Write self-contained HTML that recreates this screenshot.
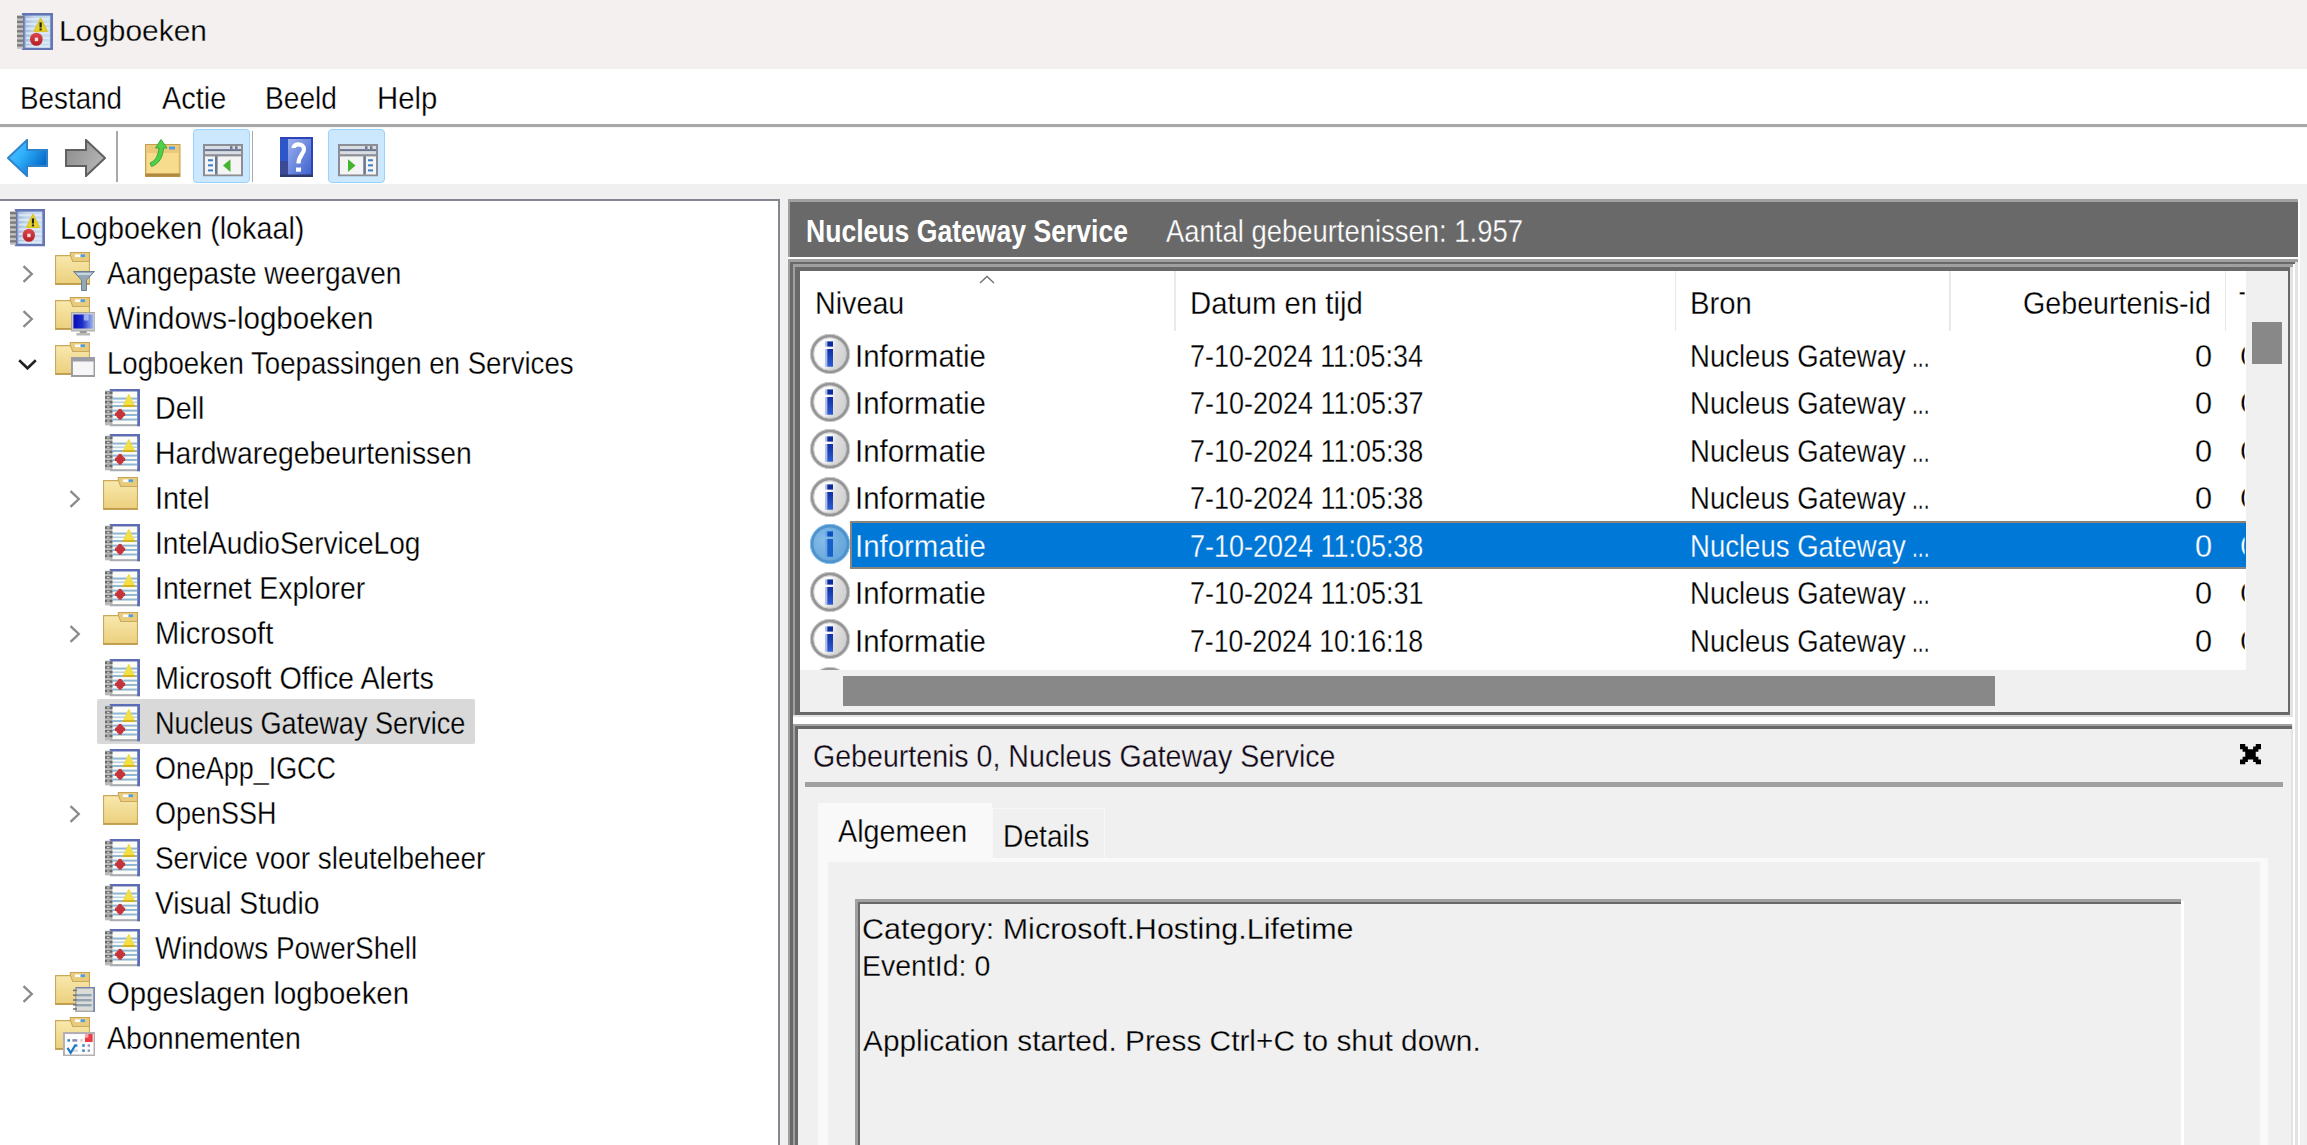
<!DOCTYPE html>
<html><head><meta charset="utf-8"><title>Logboeken</title>
<style>
html,body{margin:0;padding:0}
body{width:2307px;height:1145px;overflow:hidden;background:#fff;position:relative;font-family:"Liberation Sans", sans-serif;font-size:30px;color:#000}
body>div,body>svg,body>span{position:absolute;display:block}
.t{white-space:pre;transform-origin:0 50%;line-height:1;}
</style></head><body>
<svg width="0" height="0" style="position:absolute;left:0;top:0">
<defs>
<linearGradient id="gFold" x1="0" y1="0" x2="0" y2="1"><stop offset="0" stop-color="#f9e9ae"/><stop offset="1" stop-color="#ebcf7c"/></linearGradient>
<linearGradient id="gBack" x1="0" y1="0" x2="1" y2="0.6"><stop offset="0" stop-color="#58c6ff"/><stop offset="0.45" stop-color="#2fb0fb"/><stop offset="1" stop-color="#0468c8"/></linearGradient>
<linearGradient id="gFwd" x1="0" y1="0" x2="1" y2="0.5"><stop offset="0" stop-color="#8a8a8a"/><stop offset="0.6" stop-color="#a3a3a3"/><stop offset="1" stop-color="#b5b5b5"/></linearGradient>
<linearGradient id="gHelp" x1="0" y1="0" x2="1" y2="1"><stop offset="0" stop-color="#9cb0ee"/><stop offset="1" stop-color="#3f63cf"/></linearGradient>
<linearGradient id="gInfo" x1="0" y1="0.3" x2="1" y2="0.6"><stop offset="0" stop-color="#ffffff"/><stop offset="0.42" stop-color="#fafafa"/><stop offset="0.62" stop-color="#dedede"/><stop offset="1" stop-color="#cecece"/></linearGradient>
<linearGradient id="gInfoI" x1="0" y1="0" x2="0" y2="1"><stop offset="0" stop-color="#1030a6"/><stop offset="1" stop-color="#2c5cd4"/></linearGradient>
<radialGradient id="gInfoS" cx="0.35" cy="0.4" r="0.8"><stop offset="0" stop-color="#86bdea"/><stop offset="1" stop-color="#5c9fd6"/></radialGradient>
<linearGradient id="gMon" x1="0" y1="0" x2="1" y2="0"><stop offset="0" stop-color="#0a0ab8"/><stop offset="0.45" stop-color="#1c2cc8"/><stop offset="1" stop-color="#9ab4f0"/></linearGradient>
<linearGradient id="gEvt" x1="0" y1="0" x2="1" y2="0"><stop offset="0" stop-color="#9fb6dc"/><stop offset="0.35" stop-color="#c2d6ec"/><stop offset="1" stop-color="#c8dcf0"/></linearGradient>
<linearGradient id="gErr" x1="0" y1="0" x2="0" y2="1"><stop offset="0" stop-color="#dc4a50"/><stop offset="1" stop-color="#b41c22"/></linearGradient>
</defs>

<symbol id="log" viewBox="0 0 16 16" preserveAspectRatio="none">
 <rect x="2.2" y="0" width="13.8" height="16" fill="#a9acb2"/>
 <rect x="2.2" y="0" width="13.8" height="1.1" fill="#5d6cb6"/>
 <rect x="14.7" y="0" width="1.3" height="16" fill="#5d6cb6"/>
 <rect x="3.4" y="1.1" width="11.3" height="13.9" fill="#fbfbf7"/>
 <g fill="#8fb7d4">
  <rect x="3.4" y="3.65" width="11.3" height="0.85"/>
  <rect x="3.4" y="5.3" width="11.3" height="0.7" opacity="0.6"/>
  <rect x="3.4" y="6.85" width="11.3" height="0.85"/>
  <rect x="3.4" y="8.8" width="11.3" height="0.85"/>
  <rect x="3.4" y="10.65" width="11.3" height="0.85"/>
  <rect x="3.4" y="12.6" width="11.3" height="0.85"/>
 </g>
 <rect x="0" y="0.7" width="2.6" height="14.8" fill="#b9b9b9"/>
 <g fill="#666">
  <rect x="0" y="1.1" width="3.4" height="1"/><rect x="0" y="3.1" width="3.4" height="1"/><rect x="0" y="5.1" width="3.4" height="1"/>
  <rect x="0" y="7.1" width="3.4" height="1"/><rect x="0" y="9.1" width="3.4" height="1"/><rect x="0" y="11.1" width="3.4" height="1"/><rect x="0" y="13.1" width="3.4" height="1"/>
 </g>
 <g fill="#cfcfcf"><rect x="0.9" y="1.4" width="1.2" height="0.5"/><rect x="0.9" y="3.4" width="1.2" height="0.5"/><rect x="0.9" y="5.4" width="1.2" height="0.5"/><rect x="0.9" y="7.4" width="1.2" height="0.5"/><rect x="0.9" y="9.4" width="1.2" height="0.5"/><rect x="0.9" y="11.4" width="1.2" height="0.5"/><rect x="0.9" y="13.4" width="1.2" height="0.5"/></g>
 <path d="M10.9 2.5 L13.4 7.3 L8.4 7.3 Z" fill="#f3e044" stroke="#f0dc48" stroke-width="0.6" stroke-linejoin="round"/>
 <rect x="8.1" y="6.9" width="5.6" height="0.7" fill="#d0ac14"/>
 <circle cx="6.9" cy="10.8" r="1.9" fill="#c8363b"/>
 <rect x="6.2" y="8.5" width="1.4" height="4.6" fill="#c4343a"/><rect x="4.6" y="10.1" width="4.6" height="1.4" fill="#c4343a"/>
</symbol>

<symbol id="evt" viewBox="0 0 16 16" preserveAspectRatio="none">
 <rect x="2.2" y="0" width="13.8" height="16" fill="#6475b6"/>
 <rect x="3.4" y="1.1" width="11.4" height="13.8" fill="url(#gEvt)"/>
 <g fill="#e2ecf7" opacity="0.85">
  <rect x="4" y="2.2" width="10.4" height="0.9"/><rect x="4" y="4.2" width="10.4" height="0.9"/><rect x="4" y="6.2" width="10.4" height="0.9"/>
  <rect x="4" y="8.2" width="10.4" height="0.9"/><rect x="4" y="10.2" width="10.4" height="0.9"/><rect x="4" y="12.2" width="10.4" height="0.9"/><rect x="4" y="13.8" width="10.4" height="0.8"/>
 </g>
 <rect x="0" y="0.9" width="2.7" height="14.4" fill="#c2c2c2"/>
 <g fill="#7a7a7a">
  <rect x="0" y="1.3" width="3" height="1"/><rect x="0" y="3.3" width="3" height="1"/><rect x="0" y="5.3" width="3" height="1"/>
  <rect x="0" y="7.3" width="3" height="1"/><rect x="0" y="9.3" width="3" height="1"/><rect x="0" y="11.3" width="3" height="1"/><rect x="0" y="13.3" width="3" height="1"/>
 </g>
 <path d="M10.5 2.3 L13.4 7.8 L7.6 7.8 Z" fill="#ead42c" stroke="#dcc528" stroke-width="0.6" stroke-linejoin="round"/>
 <rect x="10" y="4" width="1" height="2.2" fill="#222"/><rect x="10" y="6.6" width="1" height="0.8" fill="#222"/>
 <circle cx="8.6" cy="11.2" r="2.8" fill="url(#gErr)"/>
 <rect x="7.9" y="10.5" width="1.5" height="1.5" fill="#f8dede"/>
</symbol>

<symbol id="folder" viewBox="0 0 16 15" preserveAspectRatio="none">
 <path d="M7 0.25 H15.75 V5 H7 Z" fill="#e9cb7d" stroke="#c7a457" stroke-width="0.5"/>
 <rect x="9.1" y="1.1" width="2.6" height="1.2" fill="#fdfdfd"/>
 <rect x="11.7" y="1.1" width="2" height="1.2" fill="#4a9cec"/>
 <path d="M0.25 1.65 H7.1 L8.1 4.3 H15.75 V14.75 H0.25 Z" fill="url(#gFold)" stroke="#caa95d" stroke-width="0.5"/>
 <rect x="0.25" y="14.1" width="15.5" height="0.65" fill="#bf9b4e"/>
</symbol>

<symbol id="ovFilter" viewBox="0 0 22 20" preserveAspectRatio="none">
 <path d="M0.5 0.5 H21.5 L13.5 9 V19.5 H8.5 V9 Z" fill="#93a7b7" stroke="#6c7f8e" stroke-width="1"/>
 <path d="M3 2 H19 L17 4 H5 Z" fill="#c8d5df"/>
</symbol>
<symbol id="ovMon" viewBox="0 0 25 24" preserveAspectRatio="none">
 <rect x="0.5" y="0.5" width="24" height="18.5" fill="#c9c9c9" stroke="#a8a8a8"/>
 <rect x="2.5" y="2.5" width="20" height="14" fill="url(#gMon)"/>
 <rect x="13" y="2.5" width="5" height="6" fill="#c6d6f8" opacity="0.7"/>
 <rect x="9" y="19" width="7" height="2" fill="#9a9a9a"/>
 <rect x="5.5" y="21" width="14" height="2.5" fill="#b8b8b8"/>
</symbol>
<symbol id="ovWin" viewBox="0 0 25 20" preserveAspectRatio="none">
 <rect x="1" y="1" width="23" height="18" fill="#f6f6f6" stroke="#9b9da3" stroke-width="2"/>
 <rect x="1" y="1" width="23" height="3.5" fill="#9b9da3"/>
</symbol>
<symbol id="ovBook" viewBox="0 0 22 25" preserveAspectRatio="none">
 <rect x="2.4" y="0" width="19.6" height="25" fill="#7785b3"/>
 <rect x="2.4" y="1.6" width="17.8" height="23.4" fill="#a9a9a9"/>
 <rect x="3.6" y="1.6" width="16.6" height="22" fill="#dcdcd6"/>
 <g fill="#8fa3b3"><rect x="3.6" y="7" width="15" height="2.4"/><rect x="3.6" y="12" width="15" height="2.4"/><rect x="3.6" y="17" width="15" height="2.4"/></g>
 <g fill="#777"><rect x="0" y="2.6" width="4" height="1.6"/><rect x="0" y="7.4" width="4" height="1.6"/><rect x="0" y="12.2" width="4" height="1.6"/><rect x="0" y="17" width="4" height="1.6"/><rect x="0" y="21.2" width="4" height="1.6"/></g>
</symbol>
<symbol id="ovCal" viewBox="0 0 33 24" preserveAspectRatio="none">
 <rect x="1" y="1" width="31" height="22" fill="#fdfdfd" stroke="#b3afb3" stroke-width="2"/>
 <rect x="22.3" y="2" width="7.8" height="7.8" fill="#ec3b44"/>
 <rect x="22.3" y="2" width="3.5" height="3.5" fill="#f7a6aa"/>
 <g fill="#2f86c8"><rect x="4.5" y="7" width="2.6" height="2.4"/><rect x="9.5" y="7" width="5" height="2.4" fill="#8d86ac"/><rect x="17.5" y="7" width="2.6" height="2.4" fill="#e6c9cf"/>
 <rect x="12" y="12" width="2.6" height="2.4"/><rect x="19.5" y="12" width="2.6" height="2.4"/><rect x="25" y="12" width="2.4" height="2.4" fill="#9a94b8"/>
 <rect x="10" y="17" width="5" height="2.4" fill="#d6d6de"/><rect x="19.5" y="17" width="2.6" height="2.4"/><rect x="25" y="17" width="2.4" height="2.4" fill="#9a94b8"/></g>
 <path d="M4.6 15.5 L7.8 20.3 L12.6 12.6" fill="none" stroke="#1f78c4" stroke-width="2.2"/>
</symbol>

<symbol id="back" viewBox="0 0 41 38" preserveAspectRatio="none">
 <path d="M1 19 L20 1 V11 H40 V27 H20 V37 Z" fill="url(#gBack)" stroke="#2f83cc" stroke-width="2" stroke-linejoin="miter"/>
</symbol>
<symbol id="fwd" viewBox="0 0 41 38" preserveAspectRatio="none">
 <path d="M40 19 L21 1 V11 H1 V27 H21 V37 Z" fill="url(#gFwd)" stroke="#606060" stroke-width="2" stroke-linejoin="miter"/>
</symbol>
<symbol id="up" viewBox="0 0 36 38" preserveAspectRatio="none">
 <rect x="0.5" y="5.5" width="34.5" height="32" fill="#ecc978" stroke="#c39f52"/>
 <rect x="2" y="14" width="31.5" height="20" fill="#f7dc8e"/>
 <rect x="0.5" y="34.5" width="34.5" height="3" fill="#b08a3e"/>
 <rect x="24" y="7.5" width="6" height="3" fill="#4a9cec"/>
 <path d="M5 24 C11 22 13 16 14 9 L10.5 9 L16 0.5 L22 9 L18.5 9 C18 18 14 25 6.5 27.5 Z" fill="#4fd04a" stroke="#3aa836" stroke-width="1"/>
</symbol>
<symbol id="pane1" viewBox="0 0 40 32" preserveAspectRatio="none">
 <rect x="1" y="1" width="38" height="30" fill="#f4f4f4" stroke="#8b8e95" stroke-width="2"/>
 <rect x="2" y="2" width="36" height="3" fill="#d9dce3"/>
 <rect x="27" y="2.2" width="2.5" height="2.6" fill="#69748c"/><rect x="32" y="2.2" width="2.5" height="2.6" fill="#69748c"/>
 <rect x="2" y="5" width="36" height="2.2" fill="#6b7690"/>
 <rect x="2" y="7.6" width="36" height="2.2" fill="#d9dce3"/>
 <rect x="2" y="10" width="36" height="2.2" fill="#8b8e95"/>
 <rect x="12" y="12" width="2.6" height="18" fill="#6b7690"/>
 <g fill="#3b7fc4"><rect x="5" y="15" width="5" height="2"/><rect x="5" y="20" width="5" height="2"/><rect x="5" y="25" width="5" height="2"/></g>
 <path d="M27.5 15 V27.5 L20 21.2 Z" fill="#42b52c"/>
</symbol>
<symbol id="pane2" viewBox="0 0 40 32" preserveAspectRatio="none">
 <rect x="1" y="1" width="38" height="30" fill="#f4f4f4" stroke="#8b8e95" stroke-width="2"/>
 <rect x="2" y="2" width="36" height="3" fill="#d9dce3"/>
 <rect x="27" y="2.2" width="2.5" height="2.6" fill="#69748c"/><rect x="32" y="2.2" width="2.5" height="2.6" fill="#69748c"/>
 <rect x="2" y="5" width="36" height="2.2" fill="#6b7690"/>
 <rect x="2" y="7.6" width="36" height="2.2" fill="#d9dce3"/>
 <rect x="2" y="10" width="36" height="2.2" fill="#8b8e95"/>
 <rect x="25.3" y="12" width="2.6" height="18" fill="#6b7690"/>
 <g fill="#3b7fc4"><rect x="30" y="15" width="5" height="2"/><rect x="30" y="20" width="5" height="2"/><rect x="30" y="25" width="5" height="2"/></g>
 <path d="M10 15 V27.5 L17.5 21.2 Z" fill="#42b52c"/>
</symbol>
<symbol id="help" viewBox="0 0 33 40" preserveAspectRatio="none">
 <rect x="0" y="0" width="33" height="40" fill="#2c44b8"/>
 <rect x="0" y="2" width="8" height="36" fill="#2f56c8"/>
 <rect x="0" y="24" width="8" height="14" fill="#3a4a94"/>
 <rect x="8" y="2" width="23" height="36" fill="url(#gHelp)"/>
 <rect x="0" y="37.5" width="33" height="2.5" fill="#2e3a6e"/>
 <path d="M13.5 11 C13.5 6.5 23.5 5.5 24 12 C24.3 16.5 18.5 18.5 18.5 26.5" fill="none" stroke="#fff" stroke-width="4.2"/>
 <rect x="16" y="30.5" width="5" height="4.2" fill="#fff"/>
</symbol>

<symbol id="info" viewBox="0 0 40 40">
 <circle cx="20" cy="20" r="18.2" fill="url(#gInfo)" stroke="#959595" stroke-width="3.4"/>
 <circle cx="20" cy="20" r="19.7" fill="none" stroke="#cfcfcf" stroke-width="0.9"/>
 <circle cx="20" cy="20" r="16.2" fill="none" stroke="#c9c9c9" stroke-width="0.8"/>
 <rect x="15.1" y="7.4" width="2.4" height="5.2" fill="#aebce6"/>
 <rect x="15.1" y="15" width="2.4" height="17.7" fill="#aebce6"/>
 <rect x="17.3" y="7.4" width="5.7" height="5.2" fill="#0c2c9c"/>
 <rect x="17.3" y="15" width="5.7" height="17.7" fill="url(#gInfoI)"/>
</symbol>
<symbol id="infoS" viewBox="0 0 40 40">
 <circle cx="20" cy="20" r="18.2" fill="url(#gInfoS)" stroke="#4f93cc" stroke-width="3.4"/>
 <circle cx="20" cy="20" r="19.7" fill="none" stroke="#8cc4f0" stroke-width="0.9"/>
 <rect x="15.1" y="7.4" width="2.4" height="5.2" fill="#6aa6e2"/>
 <rect x="15.1" y="15" width="2.4" height="17.7" fill="#6aa6e2"/>
 <rect x="17.3" y="7.4" width="5.7" height="5.2" fill="#0a50c0"/>
 <rect x="17.3" y="15" width="5.7" height="17.7" fill="#1660cc"/>
</symbol>

<symbol id="chevR" viewBox="0 0 12 18"><path d="M1.5 1.2 L9.8 9 L1.5 16.8" fill="none" stroke="#8a8a8a" stroke-width="2.3"/></symbol>
<symbol id="chevD" viewBox="0 0 19 11"><path d="M1.2 1.3 L9.5 9.3 L17.8 1.3" fill="none" stroke="#202020" stroke-width="2.6"/></symbol>
<symbol id="chevU" viewBox="0 0 16 9"><path d="M1 8 L8 1.5 L15 8" fill="none" stroke="#707070" stroke-width="1.4"/></symbol>
<symbol id="close" viewBox="0 0 8 8" preserveAspectRatio="none"><path fill="#000" d="M0 0H2V1H3V2H5V1H6V0H8V2H7V3H6V5H7V6H8V8H6V7H5V6H3V7H2V8H0V6H1V5H2V3H1V2H0Z"/></symbol>
</svg>
<div style="left:0px;top:0px;width:2307px;height:69px;background:#f3f0ef;"></div>
<svg style="left:17px;top:12.5px" width="36" height="37.5" ><use href="#evt"/></svg>
<span class="t" style="left:59.20px;top:16.30px;font-size:30.3px;color:#000;transform:scaleX(0.9864);-webkit-text-stroke:0.28px #f3f0ef;">Logboeken</span>
<div style="left:0px;top:69px;width:2307px;height:55px;background:#fff;"></div>
<span class="t" style="left:19.89px;top:83.00px;font-size:30.5px;color:#000;transform:scaleX(0.9115);-webkit-text-stroke:0.28px #fff;">Bestand</span>
<span class="t" style="left:162.30px;top:83.00px;font-size:30.5px;color:#000;transform:scaleX(0.9467);-webkit-text-stroke:0.28px #fff;">Actie</span>
<span class="t" style="left:265.07px;top:83.00px;font-size:30.5px;color:#000;transform:scaleX(0.9223);-webkit-text-stroke:0.28px #fff;">Beeld</span>
<span class="t" style="left:377.47px;top:83.00px;font-size:30.5px;color:#000;transform:scaleX(0.9598);-webkit-text-stroke:0.28px #fff;">Help</span>
<div style="left:0px;top:124px;width:2307px;height:2.5px;background:#a7a7a7;"></div>
<div style="left:0px;top:126.5px;width:2307px;height:1.5px;background:#f3f7fc;"></div>
<div style="left:0px;top:128px;width:2307px;height:55.5px;background:#fff;"></div>
<div style="left:0px;top:183.5px;width:2307px;height:16px;background:#f0f0f0;"></div>
<svg style="left:7px;top:139px" width="41" height="38" ><use href="#back"/></svg>
<svg style="left:64.5px;top:139px" width="41" height="38" ><use href="#fwd"/></svg>
<div style="left:116.2px;top:131px;width:1.6px;height:51px;background:#a9a9a9;"></div>
<svg style="left:145px;top:139px" width="36" height="38" ><use href="#up"/></svg>
<div style="left:192.5px;top:129px;width:57.5px;height:54px;background:#cce8ff;border:1.5px solid #99d1ff;border-radius:4px;box-sizing:border-box"></div>
<svg style="left:202.5px;top:144px" width="40" height="32.5" ><use href="#pane1"/></svg>
<div style="left:251.8px;top:131px;width:1.6px;height:51px;background:#a9a9a9;"></div>
<svg style="left:280px;top:136.5px" width="33" height="40" ><use href="#help"/></svg>
<div style="left:327.5px;top:129px;width:57.5px;height:54px;background:#cce8ff;border:1.5px solid #99d1ff;border-radius:4px;box-sizing:border-box"></div>
<svg style="left:337.5px;top:144px" width="40" height="32.5" ><use href="#pane2"/></svg>
<div style="left:0px;top:199px;width:2307px;height:946px;background:#f0f0f0;"></div>
<div style="left:0px;top:199px;width:780px;height:946px;background:#fff;border-top:2px solid #828790;border-right:2px solid #828790;box-sizing:border-box"></div>
<svg style="left:10px;top:209px" width="35" height="37.5" ><use href="#evt"/></svg>
<span class="t" style="left:59.80px;top:213.00px;font-size:30.5px;color:#000;transform:scaleX(0.9418);-webkit-text-stroke:0.28px #fff;">Logboeken (lokaal)</span>
<svg style="left:22px;top:265px" width="12" height="18" ><use href="#chevR"/></svg>
<svg style="left:54.8px;top:252px" width="35" height="33" ><use href="#folder"/></svg>
<svg style="left:73px;top:271px" width="22" height="20" ><use href="#ovFilter"/></svg>
<span class="t" style="left:107.30px;top:258.00px;font-size:30.5px;color:#000;transform:scaleX(0.9185);-webkit-text-stroke:0.28px #fff;">Aangepaste weergaven</span>
<svg style="left:22px;top:310px" width="12" height="18" ><use href="#chevR"/></svg>
<svg style="left:54.8px;top:297px" width="35" height="33" ><use href="#folder"/></svg>
<svg style="left:70.5px;top:312px" width="24.5" height="24" ><use href="#ovMon"/></svg>
<span class="t" style="left:107.30px;top:303.00px;font-size:30.5px;color:#000;transform:scaleX(0.9701);-webkit-text-stroke:0.28px #fff;">Windows-logboeken</span>
<svg style="left:18px;top:358.5px" width="19" height="11" ><use href="#chevD"/></svg>
<svg style="left:54.8px;top:342px" width="35" height="33" ><use href="#folder"/></svg>
<svg style="left:70.5px;top:357px" width="24.5" height="20" ><use href="#ovWin"/></svg>
<span class="t" style="left:107.30px;top:348.00px;font-size:30.5px;color:#000;transform:scaleX(0.9062);-webkit-text-stroke:0.28px #fff;">Logboeken Toepassingen en Services</span>
<svg style="left:105px;top:389px" width="35" height="37.5" ><use href="#log"/></svg>
<span class="t" style="left:154.80px;top:393.00px;font-size:30.5px;color:#000;transform:scaleX(0.9372);-webkit-text-stroke:0.28px #fff;">Dell</span>
<svg style="left:105px;top:434px" width="35" height="37.5" ><use href="#log"/></svg>
<span class="t" style="left:154.80px;top:438.00px;font-size:30.5px;color:#000;transform:scaleX(0.9296);-webkit-text-stroke:0.28px #fff;">Hardwaregebeurtenissen</span>
<svg style="left:68.5px;top:490px" width="12" height="18" ><use href="#chevR"/></svg>
<svg style="left:102.5px;top:477px" width="35" height="33" ><use href="#folder"/></svg>
<span class="t" style="left:154.80px;top:483.00px;font-size:30.5px;color:#000;transform:scaleX(0.9482);-webkit-text-stroke:0.28px #fff;">Intel</span>
<svg style="left:105px;top:524px" width="35" height="37.5" ><use href="#log"/></svg>
<span class="t" style="left:154.80px;top:528.00px;font-size:30.5px;color:#000;transform:scaleX(0.9206);-webkit-text-stroke:0.28px #fff;">IntelAudioServiceLog</span>
<svg style="left:105px;top:569px" width="35" height="37.5" ><use href="#log"/></svg>
<span class="t" style="left:154.80px;top:573.00px;font-size:30.5px;color:#000;transform:scaleX(0.9324);-webkit-text-stroke:0.28px #fff;">Internet Explorer</span>
<svg style="left:68.5px;top:625px" width="12" height="18" ><use href="#chevR"/></svg>
<svg style="left:102.5px;top:612px" width="35" height="33" ><use href="#folder"/></svg>
<span class="t" style="left:154.80px;top:618.00px;font-size:30.5px;color:#000;transform:scaleX(0.9565);-webkit-text-stroke:0.28px #fff;">Microsoft</span>
<svg style="left:105px;top:659px" width="35" height="37.5" ><use href="#log"/></svg>
<span class="t" style="left:154.80px;top:663.00px;font-size:30.5px;color:#000;transform:scaleX(0.9420);-webkit-text-stroke:0.28px #fff;">Microsoft Office Alerts</span>
<div style="left:97px;top:699px;width:378px;height:45px;background:#d9d9d9;border-radius:2px"></div>
<svg style="left:105px;top:704px" width="35" height="37.5" ><use href="#log"/></svg>
<span class="t" style="left:154.80px;top:708.00px;font-size:30.5px;color:#000;transform:scaleX(0.8888);-webkit-text-stroke:0.28px #d9d9d9;">Nucleus Gateway Service</span>
<svg style="left:105px;top:749px" width="35" height="37.5" ><use href="#log"/></svg>
<span class="t" style="left:154.80px;top:753.00px;font-size:30.5px;color:#000;transform:scaleX(0.8822);-webkit-text-stroke:0.28px #fff;">OneApp_IGCC</span>
<svg style="left:68.5px;top:805px" width="12" height="18" ><use href="#chevR"/></svg>
<svg style="left:102.5px;top:792px" width="35" height="33" ><use href="#folder"/></svg>
<span class="t" style="left:154.80px;top:798.00px;font-size:30.5px;color:#000;transform:scaleX(0.8840);-webkit-text-stroke:0.28px #fff;">OpenSSH</span>
<svg style="left:105px;top:839px" width="35" height="37.5" ><use href="#log"/></svg>
<span class="t" style="left:154.80px;top:843.00px;font-size:30.5px;color:#000;transform:scaleX(0.9146);-webkit-text-stroke:0.28px #fff;">Service voor sleutelbeheer</span>
<svg style="left:105px;top:884px" width="35" height="37.5" ><use href="#log"/></svg>
<span class="t" style="left:154.80px;top:888.00px;font-size:30.5px;color:#000;transform:scaleX(0.9269);-webkit-text-stroke:0.28px #fff;">Visual Studio</span>
<svg style="left:105px;top:929px" width="35" height="37.5" ><use href="#log"/></svg>
<span class="t" style="left:154.80px;top:933.00px;font-size:30.5px;color:#000;transform:scaleX(0.9150);-webkit-text-stroke:0.28px #fff;">Windows PowerShell</span>
<svg style="left:22px;top:985px" width="12" height="18" ><use href="#chevR"/></svg>
<svg style="left:54.8px;top:972px" width="35" height="33" ><use href="#folder"/></svg>
<svg style="left:73px;top:986.7px" width="22" height="25" ><use href="#ovBook"/></svg>
<span class="t" style="left:107.30px;top:978.00px;font-size:30.5px;color:#000;transform:scaleX(0.9626);-webkit-text-stroke:0.28px #fff;">Opgeslagen logboeken</span>
<svg style="left:54.8px;top:1017px" width="35" height="33" ><use href="#folder"/></svg>
<svg style="left:62.5px;top:1031.9px" width="32.5" height="24.6" ><use href="#ovCal"/></svg>
<span class="t" style="left:107.30px;top:1023.00px;font-size:30.5px;color:#000;transform:scaleX(0.9368);-webkit-text-stroke:0.28px #fff;">Abonnementen</span>
<div style="left:788px;top:199px;width:1510px;height:58px;background:#a0a0a0;"></div>
<div style="left:790px;top:202px;width:1508px;height:55px;background:#696969;"></div>
<div style="left:788px;top:257px;width:1512px;height:2px;background:#fff;"></div>
<span class="t" style="left:805.54px;top:215.50px;font-size:30.5px;color:#fff;transform:scaleX(0.8713);font-weight:bold;">Nucleus Gateway Service</span>
<span class="t" style="left:1165.91px;top:215.50px;font-size:30.5px;color:#fff;transform:scaleX(0.8995);-webkit-text-stroke:0.28px #696969;">Aantal gebeurtenissen: 1.957</span>
<div style="left:788px;top:259px;width:2px;height:886px;background:#a0a0a0;"></div>
<div style="left:790px;top:259px;width:3px;height:886px;background:#696969;"></div>
<div style="left:788px;top:259px;width:1510px;height:3px;background:#a0a0a0;"></div>
<div style="left:790px;top:262px;width:1505px;height:2px;background:#696969;"></div>
<div style="left:793px;top:264px;width:1500px;height:3px;background:#a0a0a0;"></div>
<div style="left:793px;top:264px;width:2px;height:451px;background:#a0a0a0;"></div>
<div style="left:795px;top:267px;width:1495px;height:4px;background:#696969;"></div>
<div style="left:795px;top:267px;width:5px;height:448px;background:#696969;"></div>
<div style="left:2288px;top:271px;width:2px;height:444px;background:#696969;"></div>
<div style="left:2290px;top:267px;width:3px;height:450px;background:#e3e3e3;"></div>
<div style="left:2293px;top:264px;width:2px;height:881px;background:#fff;"></div>
<div style="left:2295px;top:262px;width:3px;height:883px;background:#e3e3e3;"></div>
<div style="left:2298px;top:199px;width:2px;height:946px;background:#fff;"></div>
<div style="left:800px;top:271px;width:1446px;height:399px;background:#fff;"></div>
<div style="left:2246px;top:271px;width:42px;height:441px;background:#f0f0f0;"></div>
<div style="left:2252px;top:322px;width:30px;height:42px;background:#888888;"></div>
<div style="left:800px;top:670px;width:1446px;height:42px;background:#f0f0f0;"></div>
<div style="left:843px;top:676px;width:1152px;height:29.5px;background:#888888;"></div>
<div style="left:795px;top:712px;width:1495px;height:3px;background:#696969;"></div>
<div style="left:793px;top:715px;width:1500px;height:2px;background:#e3e3e3;"></div>
<div style="left:793px;top:717px;width:1502px;height:7px;background:#fff;"></div>
<div style="left:1174px;top:271px;width:1.5px;height:60px;background:#e9e9e9;"></div>
<div style="left:1674.5px;top:271px;width:1.5px;height:60px;background:#e9e9e9;"></div>
<div style="left:1949px;top:271px;width:1.5px;height:60px;background:#e9e9e9;"></div>
<div style="left:2224.5px;top:271px;width:1.5px;height:60px;background:#e9e9e9;"></div>
<svg style="left:979px;top:274.5px" width="16" height="9" ><use href="#chevU"/></svg>
<span class="t" style="left:814.82px;top:288.00px;font-size:30.5px;color:#000;transform:scaleX(0.9406);-webkit-text-stroke:0.28px #fff;">Niveau</span>
<span class="t" style="left:1189.77px;top:288.00px;font-size:30.5px;color:#000;transform:scaleX(0.9617);-webkit-text-stroke:0.28px #fff;">Datum en tijd</span>
<span class="t" style="left:1690.07px;top:288.00px;font-size:30.5px;color:#000;transform:scaleX(0.9609);-webkit-text-stroke:0.28px #fff;">Bron</span>
<span class="t" style="left:2022.52px;top:288.00px;font-size:30.5px;color:#000;transform:scaleX(0.9391);-webkit-text-stroke:0.28px #fff;">Gebeurtenis-id</span>
<span class="t" style="left:2239.35px;top:288.00px;font-size:30.5px;color:#000;transform:scaleX(0.9300);-webkit-text-stroke:0.28px #fff;width:6.45161px;overflow:hidden;">T</span>
<svg style="left:810px;top:334px" width="40" height="40" ><use href="#info"/></svg>
<span class="t" style="left:854.91px;top:340.50px;font-size:30.5px;color:#000;transform:scaleX(0.9646);-webkit-text-stroke:0.28px #fff;">Informatie</span>
<span class="t" style="left:1190.09px;top:340.50px;font-size:30.5px;color:#000;transform:scaleX(0.8822);-webkit-text-stroke:0.28px #fff;">7-10-2024 11:05:34</span>
<span class="t" style="left:1690.22px;top:340.50px;font-size:30.5px;color:#000;transform:scaleX(0.9028);-webkit-text-stroke:0.28px #fff;">Nucleus Gateway</span>
<span class="t" style="left:1912.29px;top:340.50px;font-size:30.5px;color:#000;transform:scaleX(0.6912);-webkit-text-stroke:0.28px #fff;">...</span>
<span class="t" style="left:2194.50px;top:340.50px;font-size:30.5px;color:#000;transform:scaleX(1.0081);-webkit-text-stroke:0.28px #fff;">0</span>
<span class="t" style="left:2240.03px;top:340.50px;font-size:30.5px;color:#000;transform:scaleX(0.9300);-webkit-text-stroke:0.28px #fff;width:4.83871px;overflow:hidden;">G</span>
<svg style="left:810px;top:381.5px" width="40" height="40" ><use href="#info"/></svg>
<span class="t" style="left:854.91px;top:388.00px;font-size:30.5px;color:#000;transform:scaleX(0.9646);-webkit-text-stroke:0.28px #fff;">Informatie</span>
<span class="t" style="left:1190.09px;top:388.00px;font-size:30.5px;color:#000;transform:scaleX(0.8846);-webkit-text-stroke:0.28px #fff;">7-10-2024 11:05:37</span>
<span class="t" style="left:1690.22px;top:388.00px;font-size:30.5px;color:#000;transform:scaleX(0.9028);-webkit-text-stroke:0.28px #fff;">Nucleus Gateway</span>
<span class="t" style="left:1912.29px;top:388.00px;font-size:30.5px;color:#000;transform:scaleX(0.6912);-webkit-text-stroke:0.28px #fff;">...</span>
<span class="t" style="left:2194.50px;top:388.00px;font-size:30.5px;color:#000;transform:scaleX(1.0081);-webkit-text-stroke:0.28px #fff;">0</span>
<span class="t" style="left:2240.03px;top:388.00px;font-size:30.5px;color:#000;transform:scaleX(0.9300);-webkit-text-stroke:0.28px #fff;width:4.83871px;overflow:hidden;">G</span>
<svg style="left:810px;top:429px" width="40" height="40" ><use href="#info"/></svg>
<span class="t" style="left:854.91px;top:435.50px;font-size:30.5px;color:#000;transform:scaleX(0.9646);-webkit-text-stroke:0.28px #fff;">Informatie</span>
<span class="t" style="left:1190.09px;top:435.50px;font-size:30.5px;color:#000;transform:scaleX(0.8840);-webkit-text-stroke:0.28px #fff;">7-10-2024 11:05:38</span>
<span class="t" style="left:1690.22px;top:435.50px;font-size:30.5px;color:#000;transform:scaleX(0.9028);-webkit-text-stroke:0.28px #fff;">Nucleus Gateway</span>
<span class="t" style="left:1912.29px;top:435.50px;font-size:30.5px;color:#000;transform:scaleX(0.6912);-webkit-text-stroke:0.28px #fff;">...</span>
<span class="t" style="left:2194.50px;top:435.50px;font-size:30.5px;color:#000;transform:scaleX(1.0081);-webkit-text-stroke:0.28px #fff;">0</span>
<span class="t" style="left:2240.03px;top:435.50px;font-size:30.5px;color:#000;transform:scaleX(0.9300);-webkit-text-stroke:0.28px #fff;width:4.83871px;overflow:hidden;">G</span>
<svg style="left:810px;top:476.5px" width="40" height="40" ><use href="#info"/></svg>
<span class="t" style="left:854.91px;top:483.00px;font-size:30.5px;color:#000;transform:scaleX(0.9646);-webkit-text-stroke:0.28px #fff;">Informatie</span>
<span class="t" style="left:1190.09px;top:483.00px;font-size:30.5px;color:#000;transform:scaleX(0.8840);-webkit-text-stroke:0.28px #fff;">7-10-2024 11:05:38</span>
<span class="t" style="left:1690.22px;top:483.00px;font-size:30.5px;color:#000;transform:scaleX(0.9028);-webkit-text-stroke:0.28px #fff;">Nucleus Gateway</span>
<span class="t" style="left:1912.29px;top:483.00px;font-size:30.5px;color:#000;transform:scaleX(0.6912);-webkit-text-stroke:0.28px #fff;">...</span>
<span class="t" style="left:2194.50px;top:483.00px;font-size:30.5px;color:#000;transform:scaleX(1.0081);-webkit-text-stroke:0.28px #fff;">0</span>
<span class="t" style="left:2240.03px;top:483.00px;font-size:30.5px;color:#000;transform:scaleX(0.9300);-webkit-text-stroke:0.28px #fff;width:4.83871px;overflow:hidden;">G</span>
<div style="left:850px;top:521px;width:1396px;height:48px;background:#0078d7;border:2px solid #8a847c;border-right:none;box-sizing:border-box"></div>
<svg style="left:810px;top:524px" width="40" height="40" ><use href="#infoS"/></svg>
<span class="t" style="left:854.91px;top:530.50px;font-size:30.5px;color:#fff;transform:scaleX(0.9646);-webkit-text-stroke:0.28px #0078d7;">Informatie</span>
<span class="t" style="left:1190.09px;top:530.50px;font-size:30.5px;color:#fff;transform:scaleX(0.8840);-webkit-text-stroke:0.28px #0078d7;">7-10-2024 11:05:38</span>
<span class="t" style="left:1690.22px;top:530.50px;font-size:30.5px;color:#fff;transform:scaleX(0.9028);-webkit-text-stroke:0.28px #0078d7;">Nucleus Gateway</span>
<span class="t" style="left:1912.29px;top:530.50px;font-size:30.5px;color:#fff;transform:scaleX(0.6912);-webkit-text-stroke:0.28px #0078d7;">...</span>
<span class="t" style="left:2194.50px;top:530.50px;font-size:30.5px;color:#fff;transform:scaleX(1.0081);-webkit-text-stroke:0.28px #0078d7;">0</span>
<span class="t" style="left:2240.03px;top:530.50px;font-size:30.5px;color:#fff;transform:scaleX(0.9300);-webkit-text-stroke:0.28px #0078d7;width:4.83871px;overflow:hidden;">G</span>
<svg style="left:810px;top:571.5px" width="40" height="40" ><use href="#info"/></svg>
<span class="t" style="left:854.91px;top:578.00px;font-size:30.5px;color:#000;transform:scaleX(0.9646);-webkit-text-stroke:0.28px #fff;">Informatie</span>
<span class="t" style="left:1190.09px;top:578.00px;font-size:30.5px;color:#000;transform:scaleX(0.8845);-webkit-text-stroke:0.28px #fff;">7-10-2024 11:05:31</span>
<span class="t" style="left:1690.22px;top:578.00px;font-size:30.5px;color:#000;transform:scaleX(0.9028);-webkit-text-stroke:0.28px #fff;">Nucleus Gateway</span>
<span class="t" style="left:1912.29px;top:578.00px;font-size:30.5px;color:#000;transform:scaleX(0.6912);-webkit-text-stroke:0.28px #fff;">...</span>
<span class="t" style="left:2194.50px;top:578.00px;font-size:30.5px;color:#000;transform:scaleX(1.0081);-webkit-text-stroke:0.28px #fff;">0</span>
<span class="t" style="left:2240.03px;top:578.00px;font-size:30.5px;color:#000;transform:scaleX(0.9300);-webkit-text-stroke:0.28px #fff;width:4.83871px;overflow:hidden;">G</span>
<svg style="left:810px;top:619px" width="40" height="40" ><use href="#info"/></svg>
<span class="t" style="left:854.91px;top:625.50px;font-size:30.5px;color:#000;transform:scaleX(0.9646);-webkit-text-stroke:0.28px #fff;">Informatie</span>
<span class="t" style="left:1190.10px;top:625.50px;font-size:30.5px;color:#000;transform:scaleX(0.8758);-webkit-text-stroke:0.28px #fff;">7-10-2024 10:16:18</span>
<span class="t" style="left:1690.22px;top:625.50px;font-size:30.5px;color:#000;transform:scaleX(0.9028);-webkit-text-stroke:0.28px #fff;">Nucleus Gateway</span>
<span class="t" style="left:1912.29px;top:625.50px;font-size:30.5px;color:#000;transform:scaleX(0.6912);-webkit-text-stroke:0.28px #fff;">...</span>
<span class="t" style="left:2194.50px;top:625.50px;font-size:30.5px;color:#000;transform:scaleX(1.0081);-webkit-text-stroke:0.28px #fff;">0</span>
<span class="t" style="left:2240.03px;top:625.50px;font-size:30.5px;color:#000;transform:scaleX(0.9300);-webkit-text-stroke:0.28px #fff;width:4.83871px;overflow:hidden;">G</span>
<div style="left:810px;top:666.5px;width:40px;height:3.5px;overflow:hidden"><svg width="40" height="40" style="position:absolute;left:0;top:0"><use href="#info"/></svg></div>
<div style="left:793px;top:724px;width:1499px;height:2px;background:#a0a0a0;"></div>
<div style="left:793px;top:724px;width:2px;height:421px;background:#a0a0a0;"></div>
<div style="left:795px;top:726px;width:1497px;height:3px;background:#696969;"></div>
<div style="left:795px;top:726px;width:3px;height:419px;background:#696969;"></div>
<div style="left:2291px;top:729px;width:2px;height:416px;background:#e3e3e3;"></div>
<span class="t" style="left:813.12px;top:740.70px;font-size:30.5px;color:#120818;transform:scaleX(0.9368);-webkit-text-stroke:0.28px #f0f0f0;">Gebeurtenis 0, Nucleus Gateway Service</span>
<svg style="left:2240px;top:744px" width="21" height="20.5" ><use href="#close"/></svg>
<div style="left:805px;top:782px;width:1478px;height:5px;background:#a0a0a0;"></div>
<div style="left:818px;top:803px;width:174px;height:58px;background:#f9f9f9;"></div>
<div style="left:992px;top:808px;width:113px;height:50.5px;background:#f0f0f0;border:1.5px solid #f7f7f7;border-bottom:none;box-sizing:border-box"></div>
<span class="t" style="left:837.70px;top:815.80px;font-size:30.5px;color:#000;transform:scaleX(0.9404);-webkit-text-stroke:0.28px #f9f9f9;">Algemeen</span>
<span class="t" style="left:1003.06px;top:821.00px;font-size:30.5px;color:#000;transform:scaleX(0.9251);-webkit-text-stroke:0.28px #f0f0f0;">Details</span>
<div style="left:818px;top:858px;width:1450px;height:287px;background:#f9f9f9;"></div>
<div style="left:828px;top:862px;width:1432px;height:283px;background:#f0f0f0;"></div>
<div style="left:855px;top:899px;width:1326px;height:246px;background:#a0a0a0;"></div>
<div style="left:858px;top:902px;width:1323px;height:243px;background:#696969;"></div>
<div style="left:860px;top:904px;width:1321px;height:241px;background:#f0f0f0;"></div>
<div style="left:2181px;top:901px;width:3px;height:244px;background:#fff;"></div>
<span class="t" style="left:861.98px;top:913.60px;font-size:30px;color:#000;transform:scaleX(1.0166);-webkit-text-stroke:0.28px #f0f0f0;">Category: Microsoft.Hosting.Lifetime</span>
<span class="t" style="left:862.33px;top:951.30px;font-size:30px;color:#000;transform:scaleX(0.9494);-webkit-text-stroke:0.28px #f0f0f0;">EventId: 0</span>
<span class="t" style="left:862.95px;top:1026.30px;font-size:30px;color:#000;transform:scaleX(0.9945);-webkit-text-stroke:0.28px #f0f0f0;">Application started. Press Ctrl+C to shut down.</span>
</body></html>
